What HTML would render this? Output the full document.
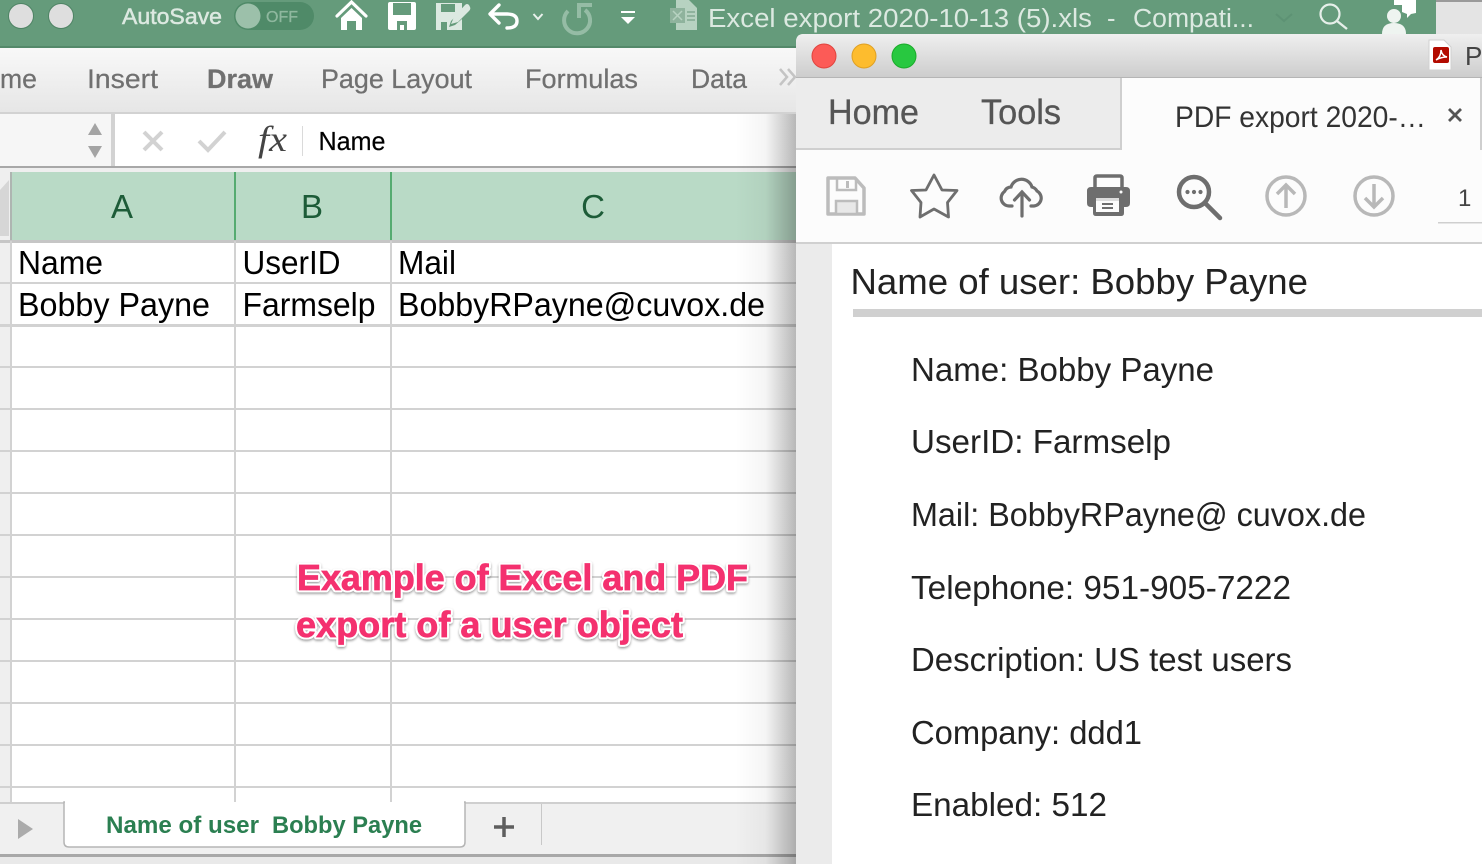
<!DOCTYPE html>
<html><head><meta charset="utf-8"><style>
html,body{margin:0;padding:0;background:#fff;width:1482px;height:864px;overflow:hidden}
svg{display:block;position:absolute;left:0;top:0}
text{font-family:"Liberation Sans",sans-serif;white-space:pre}
</style></head><body>
<svg width="1482" height="864" viewBox="0 0 1482 864" xmlns="http://www.w3.org/2000/svg">
<defs>
<linearGradient id="rib" x1="0" y1="0" x2="0" y2="1"><stop offset="0" stop-color="#f8f8f8"/><stop offset="1" stop-color="#e6e6e6"/></linearGradient>
<linearGradient id="tb" x1="0" y1="0" x2="0" y2="1"><stop offset="0" stop-color="#efefef"/><stop offset="1" stop-color="#cdcdcd"/></linearGradient>
<linearGradient id="sh" x1="0" y1="0" x2="1" y2="0"><stop offset="0" stop-color="#000" stop-opacity="0"/><stop offset=".5" stop-color="#000" stop-opacity=".04"/><stop offset="1" stop-color="#000" stop-opacity=".28"/></linearGradient>
<filter id="ds" x="-5%" y="-20%" width="110%" height="140%"><feDropShadow dx="0" dy="1.5" stdDeviation="1.2" flood-color="#000" flood-opacity=".4"/></filter>
</defs>

<!-- Excel title bar -->
<rect x="0" y="0" width="1482" height="48" fill="#659b7b"/>
<rect x="0" y="46" width="800" height="2" fill="#54896a"/>
<rect x="1436" y="0" width="46" height="36" fill="#e4e4e4"/>
<rect x="1436" y="0" width="46" height="2" fill="#9a9a9a"/>
<circle cx="21" cy="16" r="12.5" fill="#dedede" stroke="#4f8465" stroke-width="1"/>
<circle cx="61" cy="16" r="12.5" fill="#dedede" stroke="#4f8465" stroke-width="1"/>
<text x="122" y="24" font-size="22" textLength="100" lengthAdjust="spacingAndGlyphs" fill="#dce9e1" stroke="#dce9e1" stroke-width=".5">AutoSave</text>
<rect x="234" y="2" width="80" height="28" rx="14" fill="#4f8a68"/>
<circle cx="248" cy="16" r="12.5" fill="#9cc0aa"/>
<text x="266" y="22" font-size="15.5" textLength="32" lengthAdjust="spacingAndGlyphs" fill="#8fb89f" stroke="#8fb89f" stroke-width=".3">OFF</text>
<!-- home -->
<path d="M337 16L351.500 2L366 16" fill="none" stroke="#fff" stroke-width="3.200" stroke-linecap="round"/>
<path d="M341 18L351.500 8L362 18V30H356V21H347V30H341Z" fill="#fff"/>
<!-- save -->
<path d="M390 2H414Q416 2 416 4V28Q416 30 414 30H390Q388 30 388 28V4Q388 2 390 2Z" fill="#fff"/>
<path d="M393 3H411V15H393Z" fill="#659b7b"/>
<path d="M397 30V21H407V30H404V25H400V30Z" fill="#659b7b"/>
<!-- edit -->
<path d="M436 3H462V10L451 21L449 27L455 25L462 19V30H436Z" fill="#dce9e1"/>
<rect x="441" y="4" width="14" height="8" fill="#659b7b"/>
<path d="M441 30V22H447V30Z" fill="#659b7b"/>
<path d="M451 24L454 17L465 5Q467 3 469 5L470 7Q471 9 469 11L458 22Z" fill="#dce9e1"/>
<!-- undo -->
<path d="M499 5L490 14L499 23" fill="none" stroke="#fff" stroke-width="3.400" stroke-linecap="round" stroke-linejoin="round"/>
<path d="M491 14H507Q517 14 517 21Q517 28 507 28" fill="none" stroke="#fff" stroke-width="3.400" stroke-linecap="round"/>
<path d="M533.500 14L538 19L542.500 14" fill="none" stroke="#e8f0eb" stroke-width="2"/>
<!-- redo faded -->
<path d="M568 11A13 13 0 1 0 585 10" fill="none" stroke="#95bca5" stroke-width="4"/>
<path d="M592 5H579V18" fill="none" stroke="#95bca5" stroke-width="4"/>
<!-- customize -->
<rect x="621" y="11" width="14" height="2" fill="#fff"/>
<path d="M621 17H635L628 24Z" fill="#fff"/>
<!-- doc -->
<path d="M676 0H689L697 8V30H676Z" fill="#b7d2c1"/>
<rect x="670" y="8" width="15" height="15" fill="#8fb39d"/>
<path d="M673 11L682 20M682 11L673 20" stroke="#b7d2c1" stroke-width="1.500"/>
<path d="M687 12H695M687 16H695M687 20H695" stroke="#8fb39d" stroke-width="2"/>
<g font-size="25.5" fill="#dce9e1">
<text x="708" y="27" textLength="384" lengthAdjust="spacingAndGlyphs">Excel export 2020-10-13 (5).xls</text>
<text x="1107" y="27">-</text>
<text x="1133" y="27" textLength="121" lengthAdjust="spacingAndGlyphs">Compati...</text>
</g>
<path d="M1276 14L1284 21L1292 14" fill="none" stroke="#5d9274" stroke-width="2"/>
<!-- search -->
<circle cx="1330" cy="14" r="9.500" fill="none" stroke="#e6efe9" stroke-width="2.200"/>
<path d="M1337 21L1347 29" stroke="#e6efe9" stroke-width="2.400"/>
<!-- person -->
<circle cx="1394" cy="16" r="7" fill="#eef4f0"/>
<path d="M1382 34Q1382 23 1394 23Q1406 23 1406 34Z" fill="#eef4f0"/>
<path d="M1394 0H1416V13L1411 14L1407 18V14L1402 12V5H1394Z" fill="#fff"/>

<!-- Ribbon -->
<rect x="0" y="48" width="800" height="64" fill="url(#rib)"/>
<rect x="0" y="112" width="800" height="2" fill="#d2d2d2"/>
<g font-size="26.5" fill="#707070" stroke="#707070" stroke-width=".25">
<text x="0" y="88" textLength="37" lengthAdjust="spacingAndGlyphs">me</text>
<text x="87" y="88" textLength="71" lengthAdjust="spacingAndGlyphs">Insert</text>
<text x="207" y="88" textLength="66" lengthAdjust="spacingAndGlyphs" font-weight="bold">Draw</text>
<text x="321" y="88" textLength="151" lengthAdjust="spacingAndGlyphs">Page Layout</text>
<text x="525" y="88" textLength="113" lengthAdjust="spacingAndGlyphs">Formulas</text>
<text x="691" y="88" textLength="56" lengthAdjust="spacingAndGlyphs">Data</text>
</g>
<path d="M780 69L787 77L780 85M788 69L795 77L788 85" fill="none" stroke="#c4c4c4" stroke-width="2.500"/>

<!-- Formula bar -->
<rect x="0" y="114" width="800" height="52" fill="#fff"/>
<rect x="0" y="114" width="112" height="52" fill="#f6f6f6"/>
<rect x="111" y="114" width="4" height="52" fill="#d2d2d2"/>
<rect x="0" y="166" width="800" height="2" fill="#a8a8a8"/>
<rect x="0" y="168" width="800" height="4" fill="#efefef"/>
<path d="M95 123L102 135H88Z M88 146H102L95 158Z" fill="#a4a4a4"/>
<path d="M144 132L162 150M162 132L144 150" stroke="#d2d2d2" stroke-width="4"/>
<path d="M199 141L208 150L225 132" fill="none" stroke="#d2d2d2" stroke-width="4"/>
<text x="258" y="151" font-size="36" textLength="29" lengthAdjust="spacingAndGlyphs" fill="#444" style="font-family:'Liberation Serif',serif;font-style:italic">fx</text>
<rect x="302" y="126" width="1" height="30" fill="#dadada"/>
<text x="318.500" y="150" font-size="26" textLength="67" lengthAdjust="spacingAndGlyphs" fill="#000" stroke="#000" stroke-width=".2">Name</text>

<!-- Grid -->
<rect x="0" y="172" width="800" height="632" fill="#fff"/>
<rect x="0" y="172" width="11" height="632" fill="#efefef"/>
<path d="M9 180V236H0V190Z" fill="#d6d6d6"/>
<rect x="10" y="172" width="2" height="69" fill="#aeb5b1"/>
<rect x="12" y="172" width="784" height="69" fill="#b9dac6"/>
<rect x="234" y="172" width="2" height="69" fill="#55ab70"/>
<rect x="390" y="172" width="2" height="69" fill="#55ab70"/>
<g font-size="33" fill="#1d5c38" text-anchor="middle">
<text x="122" y="218">A</text><text x="312" y="218">B</text><text x="593" y="218">C</text>
</g>
<g fill="#d2d2d2">
<rect x="0" y="240" width="800" height="3" fill="#c6c6c6"/>
<rect x="0" y="282" width="800" height="2"/><rect x="0" y="324" width="800" height="3"/>
<rect x="0" y="366" width="800" height="2"/><rect x="0" y="408" width="800" height="2"/>
<rect x="0" y="450" width="800" height="2"/><rect x="0" y="492" width="800" height="2"/>
<rect x="0" y="534" width="800" height="2"/><rect x="0" y="576" width="800" height="2"/>
<rect x="0" y="618" width="800" height="2"/><rect x="0" y="660" width="800" height="2"/>
<rect x="0" y="702" width="800" height="2"/><rect x="0" y="744" width="800" height="2"/>
<rect x="0" y="786" width="800" height="2"/>
<rect x="10" y="241" width="2" height="562"/><rect x="234" y="241" width="2" height="562"/><rect x="390" y="241" width="2" height="562"/>
</g>
<g font-size="33" fill="#000">
<text x="18" y="274" textLength="85" lengthAdjust="spacingAndGlyphs">Name</text>
<text x="242.500" y="274" textLength="98" lengthAdjust="spacingAndGlyphs">UserID</text>
<text x="398" y="274" textLength="58" lengthAdjust="spacingAndGlyphs">Mail</text>
<text x="18" y="316" textLength="192" lengthAdjust="spacingAndGlyphs">Bobby Payne</text>
<text x="242.500" y="316" textLength="133" lengthAdjust="spacingAndGlyphs">Farmselp</text>
<text x="398" y="316" textLength="367" lengthAdjust="spacingAndGlyphs">BobbyRPayne@cuvox.de</text>
</g>

<!-- Sheet tabs -->
<rect x="0" y="803" width="800" height="52" fill="#f0f0f0"/>
<rect x="0" y="802" width="800" height="2" fill="#cfcfcf"/>
<rect x="0" y="854" width="800" height="3" fill="#a8a8a8"/>
<rect x="0" y="857" width="800" height="7" fill="#e9e9e9"/>
<path d="M64 802H465V842Q465 847 460 847H69Q64 847 64 842Z" fill="#fff" stroke="#b5b5b5" stroke-width="1.500"/>
<rect x="65" y="798" width="399" height="8" fill="#fff"/>
<rect x="234" y="788" width="2" height="14" fill="#d2d2d2"/><rect x="390" y="788" width="2" height="14" fill="#d2d2d2"/>
<text x="106" y="833" font-size="24" textLength="153" lengthAdjust="spacingAndGlyphs" font-weight="bold" fill="#2b7f51">Name of user</text>
<text x="272" y="833" font-size="24" textLength="150" lengthAdjust="spacingAndGlyphs" font-weight="bold" fill="#2b7f51">Bobby Payne</text>
<path d="M18 819L33 829L18 839Z" fill="#ababab"/>
<path d="M494 827H514M504 817V837" stroke="#5e5e5e" stroke-width="3.500"/>
<rect x="541" y="804" width="1" height="41" fill="#c8c8c8"/>

<!-- Annotation -->
<g font-size="36" font-weight="bold" style="paint-order:stroke" stroke-linejoin="round" filter="url(#ds)">
<text x="297" y="590" textLength="451" lengthAdjust="spacingAndGlyphs" fill="#f4316f" stroke="#fff" stroke-width="4.500">Example of Excel and PDF</text>
<text x="296" y="637" textLength="387" lengthAdjust="spacingAndGlyphs" fill="#f4316f" stroke="#fff" stroke-width="4.500">export of a user object</text>
</g>
<g font-size="36" font-weight="bold" fill="#f4316f" stroke="#f4316f" stroke-width=".7">
<text x="297" y="590" textLength="451" lengthAdjust="spacingAndGlyphs">Example of Excel and PDF</text>
<text x="296" y="637" textLength="387" lengthAdjust="spacingAndGlyphs">export of a user object</text>
</g>

<!-- Shadow -->
<rect x="735" y="114" width="61" height="750" fill="url(#sh)"/>

<!-- PDF window -->
<path d="M796 42Q796 34 804 34H1482V864H796Z" fill="#fcfcfc"/>
<path d="M796 77V42Q796 34 804 34H1482V77Z" fill="url(#tb)"/>
<rect x="796" y="77" width="686" height="1" fill="#b5b5b5"/>
<circle cx="824" cy="56" r="12" fill="#fc5b57" stroke="#e0443e" stroke-width="1"/>
<circle cx="864" cy="56" r="12" fill="#fdbc2e" stroke="#dfa023" stroke-width="1"/>
<circle cx="904" cy="56" r="12" fill="#28c840" stroke="#1aab29" stroke-width="1"/>
<path d="M1429 40H1444L1451 47V70H1429Z" fill="#fff" stroke="#d0d0d0" stroke-width="1"/>
<rect x="1433" y="47" width="16" height="16" rx="2" fill="#b30b00"/>
<path d="M1436 60Q1441 57 1441 50Q1442 56 1447 57Q1441 57 1436 60Z" fill="none" stroke="#fff" stroke-width="1.500"/>
<text x="1465" y="65" font-size="26" fill="#444">P</text>

<!-- PDF tabs -->
<rect x="796" y="78" width="325" height="71" fill="#ececec"/>
<rect x="796" y="148" width="326" height="2" fill="#cfcfcf"/>
<rect x="1120" y="78" width="2" height="72" fill="#cfcfcf"/>
<rect x="1122" y="78" width="358" height="72" fill="#fcfcfc"/>
<rect x="1480" y="78" width="2" height="72" fill="#cfcfcf"/>
<text x="828" y="124" font-size="35" textLength="91" lengthAdjust="spacingAndGlyphs" fill="#555" stroke="#555" stroke-width=".3">Home</text>
<text x="981" y="124" font-size="35" textLength="80" lengthAdjust="spacingAndGlyphs" fill="#555" stroke="#555" stroke-width=".3">Tools</text>
<text x="1175" y="127" font-size="30" textLength="251" lengthAdjust="spacingAndGlyphs" fill="#333">PDF export 2020-…</text>
<path d="M1449 109L1461 121M1461 109L1449 121" stroke="#555" stroke-width="2.800"/>

<!-- PDF toolbar -->
<rect x="796" y="242" width="686" height="2" fill="#d0d0d0"/>
<!-- save -->
<path d="M828 178H855L864 188V214H828Z" fill="none" stroke="#bcbcbc" stroke-width="3.500" stroke-linejoin="round"/>
<path d="M837 178V190H856V179" fill="none" stroke="#bcbcbc" stroke-width="2.500"/>
<rect x="846" y="181" width="3" height="7" fill="#bcbcbc"/>
<rect x="836" y="201" width="21" height="13" fill="#e8e8e8" stroke="#bcbcbc" stroke-width="2.500"/>
<!-- star -->
<path d="M934 175L942 190L957 190.500L947.500 202.500L948.500 217L934 209L920 217L921 202.500L911.500 190.500L926 190Z" fill="none" stroke="#6e6e6e" stroke-width="2.800" stroke-linejoin="round"/>
<!-- cloud -->
<path d="M1012 206H1009A8 8 0 0 1 1004.500 191.500A7.500 7.500 0 0 1 1011 187A11 11 0 0 1 1032 187A8 8 0 0 1 1037 191A8 8 0 0 1 1034 206H1031" fill="none" stroke="#6e6e6e" stroke-width="3.200" stroke-linecap="round"/>
<path d="M1022 216V192M1014.500 200L1022 192L1029.500 200" fill="none" stroke="#6e6e6e" stroke-width="3.200" stroke-linecap="round"/>
<!-- print -->
<path d="M1095 187V178Q1095 176 1097 176H1120Q1122 176 1122 178V187" fill="none" stroke="#6e6e6e" stroke-width="3.500"/>
<path d="M1091 187H1126Q1130 187 1130 191V203Q1130 207 1126 207H1124V213Q1124 216 1121 216H1096Q1093 216 1093 213V207H1091Q1087 207 1087 203V191Q1087 187 1091 187Z" fill="#6e6e6e"/>
<rect x="1096" y="198" width="23" height="14" fill="#fcfcfc"/>
<rect x="1096" y="198" width="23" height="3" fill="#dcdcdc"/>
<rect x="1102" y="203" width="11" height="2" fill="#6e6e6e"/><rect x="1102" y="207" width="11" height="2" fill="#6e6e6e"/>
<circle cx="1121" cy="192" r="1.500" fill="#fcfcfc"/>
<!-- search -->
<circle cx="1194" cy="192" r="15" fill="none" stroke="#6e6e6e" stroke-width="4.500"/>
<path d="M1205 203L1220 218" stroke="#6e6e6e" stroke-width="4.500" stroke-linecap="round"/>
<circle cx="1187.500" cy="192" r="2.100" fill="#6e6e6e"/><circle cx="1194" cy="192" r="2.100" fill="#6e6e6e"/><circle cx="1200.500" cy="192" r="2.100" fill="#6e6e6e"/>
<!-- up / down -->
<circle cx="1286" cy="196" r="19" fill="none" stroke="#b8b8b8" stroke-width="3.500"/>
<path d="M1286 208V185M1277 194L1286 185L1295 194" fill="none" stroke="#b8b8b8" stroke-width="3.500"/>
<circle cx="1374" cy="196" r="19" fill="none" stroke="#b8b8b8" stroke-width="3.500"/>
<path d="M1374 184V207M1365 198L1374 207L1383 198" fill="none" stroke="#b8b8b8" stroke-width="3.500"/>
<text x="1458" y="206" font-size="24" fill="#444">1</text>
<rect x="1438" y="222" width="44" height="1.500" fill="#cfcfcf"/>

<!-- PDF content -->
<rect x="796" y="244" width="36" height="620" fill="#ebebeb"/>
<rect x="832" y="244" width="650" height="620" fill="#fff"/>
<text x="850.500" y="294" font-size="36" textLength="457.500" lengthAdjust="spacingAndGlyphs" fill="#222">Name of user: Bobby Payne</text>
<rect x="853" y="309" width="629" height="8" fill="#d0d0d0"/>
<g font-size="33" fill="#222">
<text x="911" y="381" textLength="303" lengthAdjust="spacingAndGlyphs">Name: Bobby Payne</text>
<text x="911" y="453" textLength="260" lengthAdjust="spacingAndGlyphs">UserID: Farmselp</text>
<text x="911" y="526" textLength="455" lengthAdjust="spacingAndGlyphs">Mail: BobbyRPayne@ cuvox.de</text>
<text x="911" y="599" textLength="380" lengthAdjust="spacingAndGlyphs">Telephone: 951-905-7222</text>
<text x="911" y="671" textLength="381" lengthAdjust="spacingAndGlyphs">Description: US test users</text>
<text x="911" y="744" textLength="231" lengthAdjust="spacingAndGlyphs">Company: ddd1</text>
<text x="911" y="816" textLength="196" lengthAdjust="spacingAndGlyphs">Enabled: 512</text>
</g>
</svg>
</body></html>
